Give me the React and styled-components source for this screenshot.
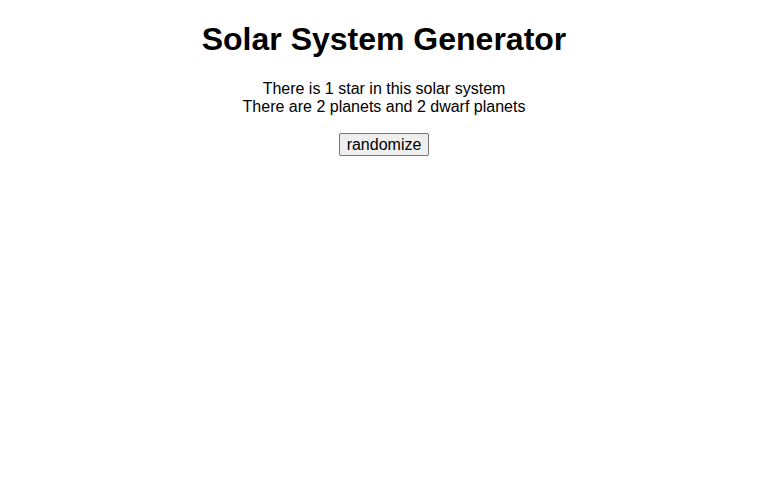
import React, { useState } from "react";
import styled, { createGlobalStyle } from "styled-components";

const GlobalStyle = createGlobalStyle`
  body {
    margin: 0;
    background: #ffffff;
    color: #000000;
    font-family: "Liberation Sans", Arial, sans-serif;
  }
`;

const Wrapper = styled.div`
  text-align: center;
  padding-top: 21px;
`;

const Title = styled.h1`
  font-size: 32px;
  font-weight: bold;
  line-height: 37px;
  margin: 0 0 22px;
`;

const Info = styled.p`
  font-size: 16px;
  line-height: 18px;
  margin: 0 0 17px;
`;

const Button = styled.button`
  font-family: "Liberation Sans", Arial, sans-serif;
  font-size: 16px;
  line-height: 19px;
  color: #000000;
  background: #efefef;
  border: 1px solid #767676;
  border-radius: 2px;
  padding: 1px 7px;
  cursor: pointer;
`;

const App = () => {
  const [sys, setSys] = useState({ stars: 1, planets: 2, dwarfs: 2 });

  const randomize = () => {
    setSys({
      stars: 1 + Math.floor(Math.random() * 3),
      planets: Math.floor(Math.random() * 10),
      dwarfs: Math.floor(Math.random() * 5),
    });
  };

  return (
    <Wrapper>
      <GlobalStyle />
      <Title>Solar System Generator</Title>
      <Info>
        {sys.stars === 1
          ? "There is 1 star in this solar system"
          : `There are ${sys.stars} stars in this solar system`}
        <br />
        There are {sys.planets} planets and {sys.dwarfs} dwarf planets
      </Info>
      <Button onClick={randomize}>randomize</Button>
    </Wrapper>
  );
};

export default App;
